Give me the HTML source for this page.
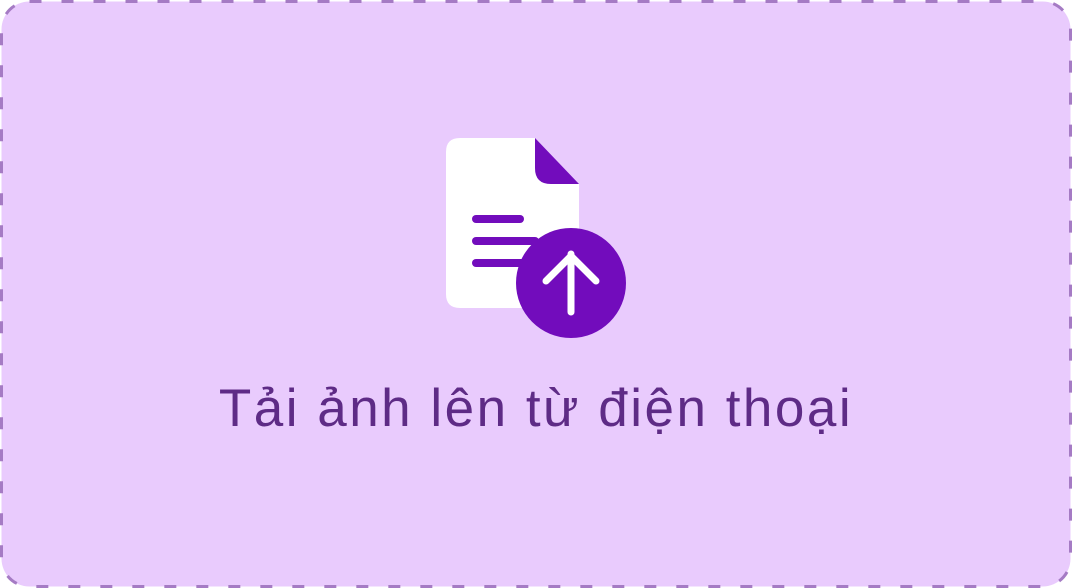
<!DOCTYPE html>
<html><head><meta charset="utf-8"><style>
html,body{margin:0;padding:0;background:#fff;}
.wrap{position:relative;width:1072px;height:588px;overflow:hidden;}
svg{position:absolute;left:0;top:0}
.t{position:absolute;left:0;width:1072px;top:374px;text-align:center;font-family:"Liberation Sans",sans-serif;font-size:53px;letter-spacing:2.5px;color:#5e2b86;line-height:70px;}
</style></head><body><div class="wrap">
<svg width="1072" height="588" viewBox="0 0 1072 588">
<rect x="1.5" y="1.5" width="1069" height="585" rx="28" fill="#e9cbfd" stroke="#a57bc4" stroke-width="3" stroke-dasharray="12 20"/>
<path d="M460 138 H535 V168 Q535 184 551 184 H579 V294 Q579 308 565 308 H460 Q446 308 446 294 V152 Q446 138 460 138 Z" fill="#fff"/>
<path d="M535 138 L579 184 H551 Q535 184 535 168 Z" fill="#720cbc"/>
<g stroke="#720cbc" stroke-width="8" stroke-linecap="round">
<line x1="476" y1="219" x2="520" y2="219"/>
<line x1="476" y1="241" x2="535" y2="241"/>
<line x1="476" y1="263" x2="525" y2="263"/>
</g>
<circle cx="571" cy="283" r="55" fill="#720cbc"/>
<g stroke="#fff" stroke-width="7" stroke-linecap="round" stroke-linejoin="round" fill="none">
<line x1="571" y1="254" x2="571" y2="312"/>
<polyline points="546,281 571,256 596,281"/>
</g>
</svg>
<div class="t">Tải ảnh lên từ điện thoại</div>
</div></body></html>
